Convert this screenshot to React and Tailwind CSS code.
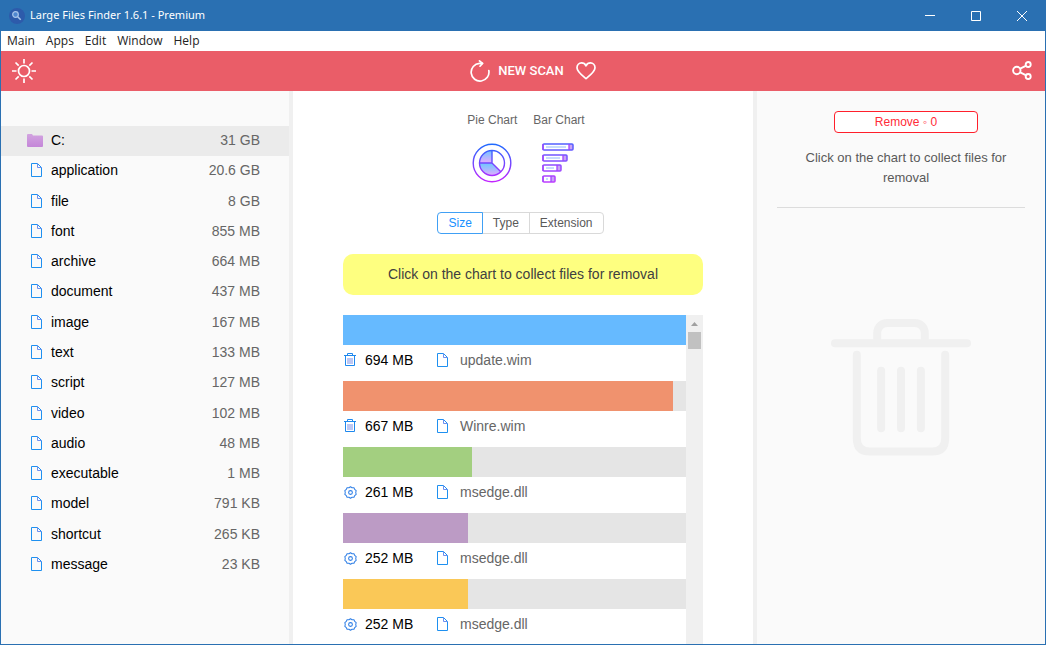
import React, { useState } from 'react';

const categories = [
  { name: 'C:', size: '31 GB', folder: true },
  { name: 'application', size: '20.6 GB' },
  { name: 'file', size: '8 GB' },
  { name: 'font', size: '855 MB' },
  { name: 'archive', size: '664 MB' },
  { name: 'document', size: '437 MB' },
  { name: 'image', size: '167 MB' },
  { name: 'text', size: '133 MB' },
  { name: 'script', size: '127 MB' },
  { name: 'video', size: '102 MB' },
  { name: 'audio', size: '48 MB' },
  { name: 'executable', size: '1 MB' },
  { name: 'model', size: '791 KB' },
  { name: 'shortcut', size: '265 KB' },
  { name: 'message', size: '23 KB' }
];

const files = [
  { name: 'update.wim', mb: 694, color: 'bg-[#66baff]', removable: true },
  { name: 'Winre.wim', mb: 667, color: 'bg-[#f0926e]', removable: true },
  { name: 'msedge.dll', mb: 261, color: 'bg-[#a3cf80]' },
  { name: 'msedge.dll', mb: 252, color: 'bg-[#bc9bc5]' },
  { name: 'msedge.dll', mb: 252, color: 'bg-[#fac857]' }
];

const maxMb = 694;

function FileIcon() {
  return (
    <svg width="12" height="14" viewBox="0 0 12 14" fill="none" stroke="#1e90f0" className="shrink-0">
      <path d="M.5.5h6l4 4v9H.5z" />
      <path d="M6.500.5v4h4" stroke="#6d8ff0" />
    </svg>
  );
}

function FolderIcon() {
  return (
    <svg width="16" height="13" viewBox="0 0 16 13" className="shrink-0">
      <defs>
        <linearGradient id="folder" x1="0" y1="0" x2="0" y2="1">
          <stop offset="0" stopColor="#d2a3e0" />
          <stop offset="1" stopColor="#c486d8" />
        </linearGradient>
      </defs>
      <path d="M0 1q0-1 1-1h4l1 1.500h9q1 0 1 1V12q0 1-1 1H1q-1 0-1-1z" fill="url(#folder)" />
    </svg>
  );
}

function SmallTrashIcon() {
  return (
    <svg width="12" height="14" viewBox="0 0 12 14" fill="none" stroke="#1e88ee" className="block shrink-0">
      <path d="M0 2.500h12M3.500 2.500v-2h5v2M1.500 2.500v10h9v-10" />
      <path d="M4 5v6M6 5v6M8 5v6" stroke="#7a8fe6" />
    </svg>
  );
}

function GearIcon() {
  return (
    <svg width="13" height="13" viewBox="-.2 -.2 12.400 12.400" fill="none" stroke="#2f7fe6" strokeLinejoin="round" className="block shrink-0">
      <path d="M6 .5 7.500 1.400 9.300 1.400 10 3 11.400 4.200 11 6 11.400 7.800 10 9 9.300 10.600 7.500 10.600 6 11.500 4.500 10.600 2.700 10.600 2 9 .6 7.800 1 6 .6 4.200 2 3 2.700 1.400 4.500 1.400z" />
      <circle cx="6" cy="6" r="1.800" />
    </svg>
  );
}

function TitleBar() {
  return (
    <header className="flex h-[31px] shrink-0 items-center bg-[#2a70b2] pr-px pl-[9px] text-white">
      <svg width="16" height="16" viewBox="0 0 16 16" fill="none">
        <circle cx="8" cy="8" r="8" fill="#2d5bab" />
        <circle cx="6.500" cy="6.500" r="2.800" fill="#4f87cf" stroke="#a9c6ec" strokeWidth="1.200" />
        <path d="m8.700 8.700 3 3" stroke="#a9c6ec" strokeWidth="1.600" />
      </svg>
      <h1 className="ml-[5px] flex-1 font-['Noto_Sans','Open_Sans',sans-serif] text-[11px]">Large Files Finder 1.6.1 - Premium</h1>
      <button type="button" aria-label="Minimize" className="flex h-full w-[46px] items-center justify-center">
        <svg width="10" height="10" viewBox="0 0 10 10" stroke="currentColor"><path d="M0 4.500h10" /></svg>
      </button>
      <button type="button" aria-label="Maximize" className="flex h-full w-[46px] items-center justify-center">
        <svg width="10" height="10" viewBox="0 0 10 10" fill="none" stroke="currentColor"><path d="M.5.5h9v9h-9z" /></svg>
      </button>
      <button type="button" aria-label="Close" className="flex h-full w-[46px] items-center justify-center">
        <svg width="10" height="10" viewBox="0 0 10 10" stroke="currentColor"><path d="m0 0 10 10M10 0 0 10" /></svg>
      </button>
    </header>
  );
}

function MenuBar() {
  return (
    <nav className="flex h-5 shrink-0 items-center gap-[11px] bg-white px-[6px] font-['Open_Sans','Noto_Sans',sans-serif] text-xs text-[#222222]">
      {['Main', 'Apps', 'Edit', 'Window', 'Help'].map(item => (
        <button key={item} type="button">{item}</button>
      ))}
    </nav>
  );
}

function Toolbar() {
  return (
    <div className="grid h-10 shrink-0 grid-cols-[1fr_auto_1fr] items-center bg-[#ea5d68] pr-[13px] pl-[11px] text-white">
      <button type="button" aria-label="Toggle theme" className="justify-self-start">
        <svg width="24" height="24" viewBox="0 0 24 24" fill="none" stroke="currentColor" strokeWidth="1.700" className="block">
          <circle cx="12" cy="12" r="5.500" />
          <path d="M12 0v4.500M12 19.500V24M0 12h4.500M19.500 12H24M3.500 3.500l3.200 3.200M17.300 17.300l3.200 3.200M3.500 20.500l3.200-3.200M17.300 6.700l3.200-3.200" />
        </svg>
      </button>
      <div className="flex items-center gap-3 pl-[22px]">
        <button type="button" className="flex items-center gap-2">
          <svg width="20" height="22" viewBox="0 0 20 22" fill="none" stroke="currentColor" strokeWidth="1.700" strokeLinecap="round" strokeLinejoin="round" className="block">
            <path d="M18.800 10.500A8.900 8.900 0 1 1 9.500 3.300H12.500" />
            <path d="m9.500 .9 3 2.500L10 6.200" />
          </svg>
          <span className="font-['Roboto',sans-serif] text-[13px] leading-5 font-medium">NEW SCAN</span>
        </button>
        <button type="button" aria-label="Favourite">
          <svg width="20" height="18" viewBox="0 0 21 19" fill="none" stroke="currentColor" strokeWidth="1.800" strokeLinejoin="round" className="block">
            <path d="M10.500 17.600C7 14.800 1 10.500 1 6.200 1 3.200 3.200 1 5.800 1c2 0 3.700 1 4.700 3 1-2 2.700-3 4.700-3C17.800 1 20 3.200 20 6.200c0 4.300-6 8.600-9.500 11.400z" />
          </svg>
        </button>
      </div>
      <button type="button" aria-label="Share" className="justify-self-end">
        <svg width="20" height="20" viewBox="0 0 20 20" fill="none" stroke="currentColor" strokeWidth="1.900" className="block">
          <circle cx="4.800" cy="9.500" r="3.700" />
          <circle cx="16.200" cy="3.500" r="2.500" />
          <circle cx="16.200" cy="15.500" r="2.500" />
          <path d="m8.200 7.700 5.500-2.900M8.200 11.300l5.500 2.900" />
        </svg>
      </button>
    </div>
  );
}

function Sidebar({ selected, onSelect }) {
  return (
    <aside className="w-[292px] shrink-0 border-r-4 border-[#f0f0f0] bg-[#fafafa] pt-[35px]">
      <ul className="flex h-[454px] flex-col justify-between">
        {categories.map(c => (
          <li key={c.name}>
            <button
              type="button"
              onClick={() => onSelect(c.name)}
              className={`flex h-[30px] w-full items-center pr-[29px] pb-0.5 pl-[26px] text-sm ${selected === c.name ? 'bg-[#ebebeb]' : ''}`}
            >
              <span className="flex w-4 justify-end">{c.folder ? <FolderIcon /> : <FileIcon />}</span>
              <span className="ml-2 text-black">{c.name}</span>
              <span className="ml-auto text-[#666666]">{c.size}</span>
            </button>
          </li>
        ))}
      </ul>
    </aside>
  );
}

function PieIcon() {
  return (
    <svg width="40" height="40" viewBox="0 0 40 40" fill="none">
      <defs>
        <linearGradient id="pieLine" gradientUnits="userSpaceOnUse" x1="0" y1="0" x2="0" y2="40">
          <stop offset="0" stopColor="#1a6dff" />
          <stop offset="1" stopColor="#c822ff" />
        </linearGradient>
        <linearGradient id="pieFill" gradientUnits="userSpaceOnUse" x1="0" y1="7" x2="0" y2="20" spreadMethod="repeat">
          <stop offset="0" stopColor="#6dc7ff" />
          <stop offset="1" stopColor="#e6abff" />
        </linearGradient>
      </defs>
      <path d="M20 20V7.500A12.500 12.500 0 0 0 7.500 20zM20 20H7.500A12.500 12.500 0 0 0 28.800 28.800z" fill="url(#pieFill)" />
      <g stroke="url(#pieLine)" strokeWidth="1.400">
        <circle cx="20" cy="20" r="18.800" />
        <circle cx="20" cy="20" r="12.500" />
        <path d="M20 7.500V20H7.500M20 20l8.800 8.800" />
      </g>
    </svg>
  );
}

function BarIcon() {
  const bars = [
    { y: 1, w: 30 },
    { y: 12, w: 24 },
    { y: 22, w: 18 },
    { y: 33, w: 12 }
  ];
  return (
    <svg width="34" height="40" viewBox="0 0 34 40" fill="none">
      <defs>
        <linearGradient id="barLine" gradientUnits="userSpaceOnUse" x1="0" y1="0" x2="0" y2="40">
          <stop offset="0" stopColor="#5060ff" />
          <stop offset="1" stopColor="#c03cff" />
        </linearGradient>
      </defs>
      {bars.map(b => (
        <g key={b.y}>
          <rect x={b.w - 3} y={b.y} width="4" height="6" fill="#c9a4f5" />
          <path d={`M4 ${b.y + 3}h${b.w - 10}`} stroke="#8fb8fa" />
          <rect x="1" y={b.y} width={b.w} height="6" rx="1" stroke="url(#barLine)" strokeWidth="1.500" />
          <path d={`M1 ${b.y}v6M${b.w - 3} ${b.y}v6`} stroke="#a342ff" strokeWidth="1.300" />
        </g>
      ))}
    </svg>
  );
}

function ChartPanel() {
  const [mode, setMode] = useState('Size');

  return (
    <main className="flex min-w-0 flex-1 flex-col items-center bg-white pt-[19px]">
      <div className="flex gap-4 pl-[6px] text-xs text-[#666666]">
        <button type="button" className="flex flex-col items-center gap-[13px]">
          <span className="leading-5">Pie Chart</span>
          <PieIcon />
        </button>
        <button type="button" className="flex flex-col items-center gap-[13px]">
          <span className="leading-5">Bar Chart</span>
          <BarIcon />
        </button>
      </div>

      <div className="mt-[29px] mr-[5px] flex h-[22px] text-xs">
        {['Size', 'Type', 'Extension'].map(m => (
          <button
            key={m}
            type="button"
            aria-pressed={mode === m}
            onClick={() => setMode(m)}
            className={`-ml-px border px-[10px] first:ml-0 first:rounded-l last:rounded-r ${mode === m ? 'z-10 border-[#40a0f5] text-[#1890ff]' : 'border-[#d9d9d9] text-[#595959]'}`}
          >
            {m}
          </button>
        ))}
      </div>

      <div className="mt-5 w-[360px] max-w-full rounded-[10px] bg-[#feff80] text-center text-sm leading-[41px] text-[#404040]">
        Click on the chart to collect files for removal
      </div>

      <div className="mt-5 flex min-h-0 w-[360px] max-w-full flex-1 overflow-hidden">
        <ul className="min-w-0 flex-1">
          {files.map((f, i) => (
            <li key={i} className="mb-[6px]">
              <div className="h-[30px] bg-[#e5e5e5]">
                <div className={`h-full ${f.color}`} style={{ width: `${(f.mb / maxMb) * 100}%` }} />
              </div>
              <div className="flex h-[30px] items-center text-sm">
                <span className="ml-px w-[21px]">{f.removable ? <SmallTrashIcon /> : <GearIcon />}</span>
                <span className="w-[72px] text-black">{f.mb} MB</span>
                <FileIcon />
                <span className="ml-[11px] text-[#666666]">{f.name}</span>
              </div>
            </li>
          ))}
        </ul>
        <div className="flex w-[17px] flex-col items-center gap-[6px] bg-[#f0f0f0] pt-[7px]">
          <svg width="7" height="4" viewBox="0 0 7 4" fill="#a0a0a0"><path d="M3.500 0 7 4H0z" /></svg>
          <div className="h-[17px] w-[13px] bg-[#c1c1c1]" />
        </div>
      </div>
    </main>
  );
}

function RemovePanel() {
  return (
    <aside className="flex w-[292px] shrink-0 flex-col border-l-4 border-[#f0f0f0] bg-[#fafafa] px-5 pt-5">
      <div className="flex flex-col items-center border-b border-[#dcdcdc] pb-[19px] pl-[10px] text-center">
        <button type="button" className="h-[22px] w-36 rounded border border-[#ff1f2b] bg-white text-xs text-[#ff2b38]">
          Remove ◦ 0
        </button>
        <p className="mt-[15px] px-4 text-[13px] leading-5 text-[#595959]">
          Click on the chart to collect files for removal
        </p>
      </div>
      <svg width="140" height="137" viewBox="0 0 141 138" fill="none" stroke="#f0f0f0" strokeWidth="8" strokeLinecap="round" className="mt-[111px] self-center">
        <path d="M4 24.500h133" />
        <path d="M46.500 24V14a10 10 0 0 1 10-10h28a10 10 0 0 1 10 10v10" strokeLinecap="butt" />
        <path d="M26 36v84q0 13.500 13 13.500h63q13 0 13-13.500V36" />
        <path d="M50.500 52v58M70.500 52v58M90.500 52v58" />
      </svg>
    </aside>
  );
}

function App() {
  const [selected, setSelected] = useState('C:');

  return (
    <div className="flex h-screen flex-col overflow-hidden bg-white font-['Liberation_Sans',Arial,sans-serif]">
      <TitleBar />
      <div className="flex min-h-0 flex-1 flex-col border border-t-0 border-[#2a70b2]">
        <MenuBar />
        <Toolbar />
        <div className="flex min-h-0 flex-1">
          <Sidebar selected={selected} onSelect={setSelected} />
          <ChartPanel />
          <RemovePanel />
        </div>
      </div>
    </div>
  );
}

export default App;
